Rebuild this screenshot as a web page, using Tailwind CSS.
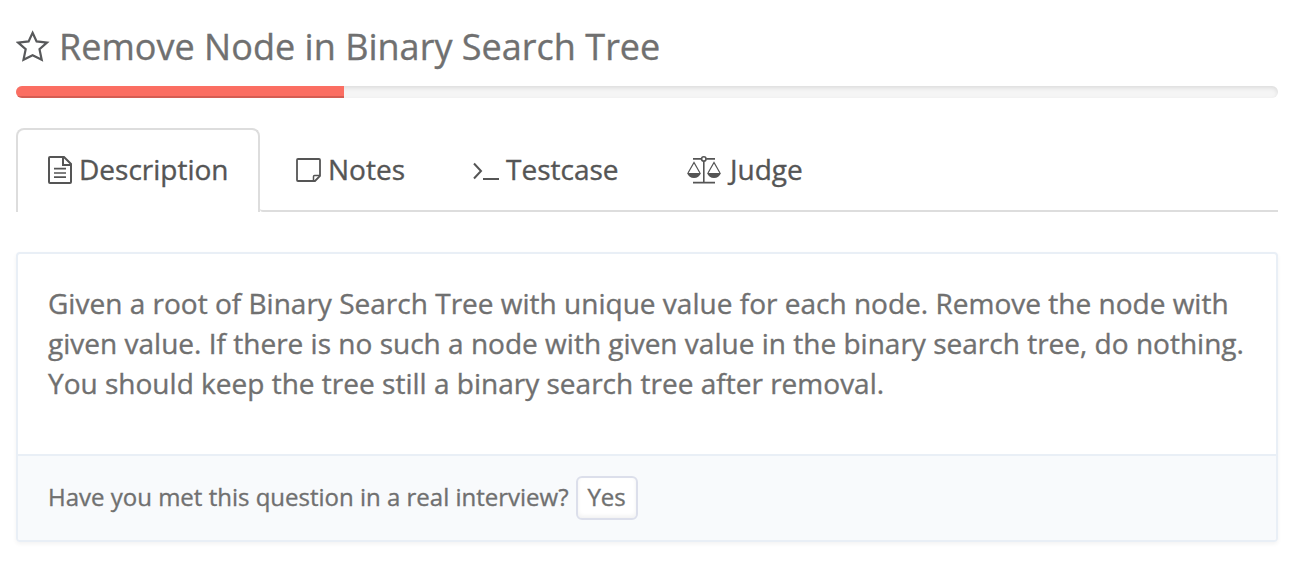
<!DOCTYPE html>
<html lang="en">
<head>
<meta charset="utf-8">
<title>Remove Node in Binary Search Tree</title>
<script src="https://cdn.jsdelivr.net/npm/@tailwindcss/browser@4"></script>
</head>
<body class="h-[570px] overflow-hidden bg-white pl-4 pr-[22px] pt-[22px] font-['Open_Sans',sans-serif] text-[28px] leading-10 text-[#707070] [-webkit-text-stroke:0.35px_currentColor]">
<header class="flex h-[50px] items-center whitespace-nowrap">
  <svg class="h-[34px] w-[34px] shrink-0" viewBox="0 0 34 34" fill="none" stroke="#58595b" stroke-width="2.200" stroke-linejoin="miter"><path d="M16.600 2.800 20.600 11.400 31 12.600 23.500 19.200 25.700 29.800 16.600 25.200 7.500 29.800 9.700 19.200 2.200 12.600 12.600 11.400Z"/></svg>
  <h1 class="ml-[9px] text-[36px] leading-[50px] tracking-[0.02px]">Remove Node in Binary Search Tree</h1>
</header>
<div class="mt-[14px] h-3 overflow-hidden rounded-full bg-[#f5f5f5] shadow-[inset_0_2px_4px_rgba(0,0,0,0.1)]">
  <div class="h-3 w-[328px] bg-[#fb6e62] shadow-[inset_0_-2px_0_rgba(0,0,0,0.15)]"></div>
</div>
<nav class="mt-[30px] flex h-[84px] whitespace-nowrap text-[#555]">
  <div class="flex w-[244px] rounded-t-lg border-2 border-b-0 border-[#ddd] pl-[30px] pt-[19px]">
    <svg class="mt-[7px] h-7 w-6 shrink-0" viewBox="0 0 24 28" fill="none" stroke="#555" stroke-width="2"><path d="M2 1H16L23 8V26Q23 27 22 27H2Q1 27 1 26V2Q1 1 2 1ZM15 1V9H23"/><path stroke-width="1.700" d="M6 12.700H18M6 17H18M6 21.200H18"/></svg>
    <span class="ml-[7px]">Description</span>
  </div>
  <div class="flex flex-1 rounded-bl-[3px] border-b-2 border-[#ddd] pt-[21px]">
    <div class="flex w-[212px] pl-9">
      <svg class="mt-[9px] h-6 w-[25px] shrink-0" viewBox="0 0 25 24" fill="none" stroke="#555"><path stroke-width="1.800" d="M2 1H23Q24 1 24 2V18L19 23H2Q1 23 1 22V2Q1 1 2 1Z"/><path stroke-width="1.500" d="M17.500 23V18.500Q17.500 17.500 18.500 17.500H24"/></svg>
      <span class="ml-[7px]">Notes</span>
    </div>
    <div class="flex w-[215px]">
      <svg class="mt-3 h-5 w-[27px] shrink-0" viewBox="0 0 27 20" fill="none" stroke="#555" stroke-width="2"><path d="M2 2.500 9 10 2 17.500M11 18H27"/></svg>
      <span class="ml-[7px]">Testcase</span>
    </div>
    <div class="flex">
      <svg class="mt-[6px] h-[30px] w-[34px] shrink-0" viewBox="0 0 34 30" fill="none" stroke="#555" stroke-width="1.600"><path stroke-width="1.800" d="M6 3.900H14.500M19.200 3.900H28M6 27.600H28"/><path d="M16.800 6V27"/><circle cx="16.800" cy="3.900" r="2.200"/><path stroke-width="1.200" d="M1 18 7 7.500 13 18M21 18 27 7.500 33 18"/><path fill="#555" stroke="none" d="M0 18H14Q12 23 7 23 2 23 0 18ZM20 18H34Q32 23 27 23 22 23 20 18Z"/></svg>
      <span class="ml-[9px]">Judge</span>
    </div>
  </div>
</nav>
<main class="mt-10 h-[290px] overflow-hidden rounded border-2 border-[#e9eff6] shadow-[0_2px_4px_rgba(0,0,0,0.05)]">
  <div class="h-[200px] whitespace-nowrap pl-[30px] pt-[29px] tracking-[0.01px]">
    <p>Given a root of Binary Search Tree with unique value for each node. Remove the node with</p>
    <p>given value. If there is no such a node with given value in the binary search tree, do nothing.</p>
    <p>You should keep the tree still a binary search tree after removal.</p>
  </div>
  <div class="flex h-[86px] items-center border-t-2 border-[#e9eff6] bg-[#f8fafc] pl-[30px] text-[24px]">
    <span class="whitespace-nowrap pb-0.5">Have you met this question in a real interview?</span>
    <button class="ml-[7px] flex h-11 w-[62px] justify-center rounded-md border-2 border-[#dcdfeb] bg-white leading-[38px] shadow-[inset_0_-2px_4px_rgba(0,0,0,0.06)]">Yes</button>
  </div>
</main>
</body>
</html>
